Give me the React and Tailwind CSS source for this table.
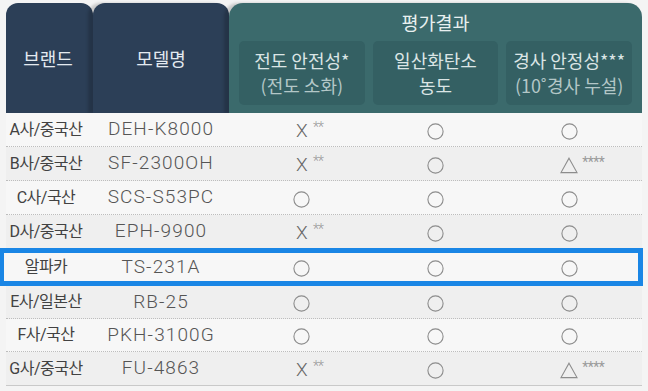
import React from 'react';

const rows = [
    { brand: 'A사/중국산', model: 'DEH-K8000', marks: ['X', 'O', 'O'] },
    { brand: 'B사/중국산', model: 'SF-2300OH', marks: ['X', 'O', 'T'] },
    { brand: 'C사/국산', model: 'SCS-S53PC', marks: ['O', 'O', 'O'] },
    { brand: 'D사/중국산', model: 'EPH-9900', marks: ['X', 'O', 'O'] },
    { brand: '알파카', model: 'TS-231A', marks: ['O', 'O', 'O'], highlight: true },
    { brand: 'E사/일본산', model: 'RB-25', marks: ['O', 'O', 'O'] },
    { brand: 'F사/국산', model: 'PKH-3100G', marks: ['O', 'O', 'O'] },
    { brand: 'G사/중국산', model: 'FU-4863', marks: ['X', 'O', 'T'] },
];

const Mark = ({ type }) => {
    if (type === 'O') {
        return (
            <svg width="17" height="17" viewBox="0 0 17 17" className="mt-[3px]">
                <circle cx="8.5" cy="8.5" r="7.6" fill="none" stroke="#8c8c8c" strokeWidth="1.1" />
            </svg>
        );
    }
    if (type === 'X') {
        return (
            <span className="relative text-[19px] leading-none text-[#666] font-light mt-[2px]">
                X
                <span className="absolute left-[17px] top-[-1px] text-[14px] text-[#9a9a9a] tracking-[-1px]">**</span>
            </span>
        );
    }
    return (
        <span className="relative flex mt-[3px]">
            <svg width="18" height="17" viewBox="0 0 18 17">
                <path d="M9 1.2 L17 15.6 L1 15.6 Z" fill="none" stroke="#8c8c8c" strokeWidth="1.1" />
            </svg>
            <span className="absolute left-[22px] top-[-2px] text-[14px] leading-none text-[#9a9a9a] whitespace-nowrap tracking-[-0.5px]">****</span>
        </span>
    );
};

const SubHead = ({ top, bottom, bottomMuted }) => (
    <div className="bg-[#346063] rounded-[5px] flex flex-col items-center justify-center text-[18px] leading-[25px] pb-[1px] whitespace-nowrap">
        <span className="text-[#dbe5e5]">{top}</span>
        <span className={bottomMuted ? 'text-[#b3c7c7]' : 'text-[#dbe5e5]'}>{bottom}</span>
    </div>
);

const App = () => {
    return (
        <div className="w-[648px] h-[391px] overflow-hidden bg-[#f4f4f4] pt-[3px] px-[6px] font-['Roboto','Noto_Sans_CJK_KR',sans-serif]">
            {/* header */}
            <div className="flex h-[110px] font-['Noto_Sans_CJK_KR',sans-serif]">
                <div className="w-[87px] bg-[#2c3f57] rounded-t-[12px] flex items-center justify-center text-[18px] text-[#e4eaf0] pr-[3px]">
                    브랜드
                </div>
                <div className="w-[136px] bg-[#2c3f57] rounded-t-[12px] flex items-center justify-center text-[18px] text-[#e4eaf0] shadow-[-5px_0_3px_rgba(0,0,0,0.18)]">
                    모델명
                </div>
                <div className="flex-1 bg-[#3b6a6c] rounded-t-[14px] flex flex-col shadow-[-5px_0_3px_rgba(0,0,0,0.18)]">
                    <div className="h-[38px] flex items-center justify-center text-[18.5px] text-[#e8f0f0] pt-[1px]">평가결과</div>
                    <div className="flex-1 grid grid-cols-3 gap-[8px] pl-[10px] pr-[10px] pb-[8px]">
                        <SubHead top="전도 안전성*" bottom="(전도 소화)" bottomMuted />
                        <SubHead top="일산화탄소" bottom="농도" />
                        <SubHead top="경사 안정성***" bottom="(10˚경사 누설)" bottomMuted />
                    </div>
                </div>
            </div>

            {/* body rows */}
            <div className="flex flex-col">
                {rows.map((row, i) => {
                    const bg = i % 2 === 0 ? 'bg-[#f7f7f7]' : 'bg-[#efefef]';
                    let cls = 'h-[34px] border-b border-dotted border-[#bdbdbd]';
                    if (i === 3) cls = 'h-[33px]';
                    if (row.highlight) cls = 'h-[38px] -ml-[7px] -mr-[1px] pl-[2px] border-[5px] border-[#1a86e5]';
                    if (i === 5 || i === 6) cls = 'h-[33px] border-b border-dotted border-[#bdbdbd]';
                    if (i === 7) cls = 'h-[34px] border-b border-solid border-[#c9c9c9]';
                    return (
                        <div key={row.model} className={`flex items-center ${bg} ${cls}`}>
                            <div className="w-[636px] shrink-0 flex items-center">
                                <div className="w-[87px] flex justify-center pr-[7px] text-[16px] text-[#424242] tracking-[-0.5px] whitespace-nowrap">
                                    {row.brand}
                                </div>
                                <div className="w-[136px] flex justify-center text-[19px] font-light text-[#555] tracking-[1.1px] whitespace-nowrap">
                                    {row.model}
                                </div>
                                <div className="flex-1 grid grid-cols-3 gap-[8px] pl-[10px] pr-[10px]">
                                    {row.marks.map((m, j) => (
                                        <div key={j} className="flex justify-center items-center">
                                            <Mark type={m} />
                                        </div>
                                    ))}
                                </div>
                            </div>
                        </div>
                    );
                })}
            </div>
        </div>
    );
};

export default App;
